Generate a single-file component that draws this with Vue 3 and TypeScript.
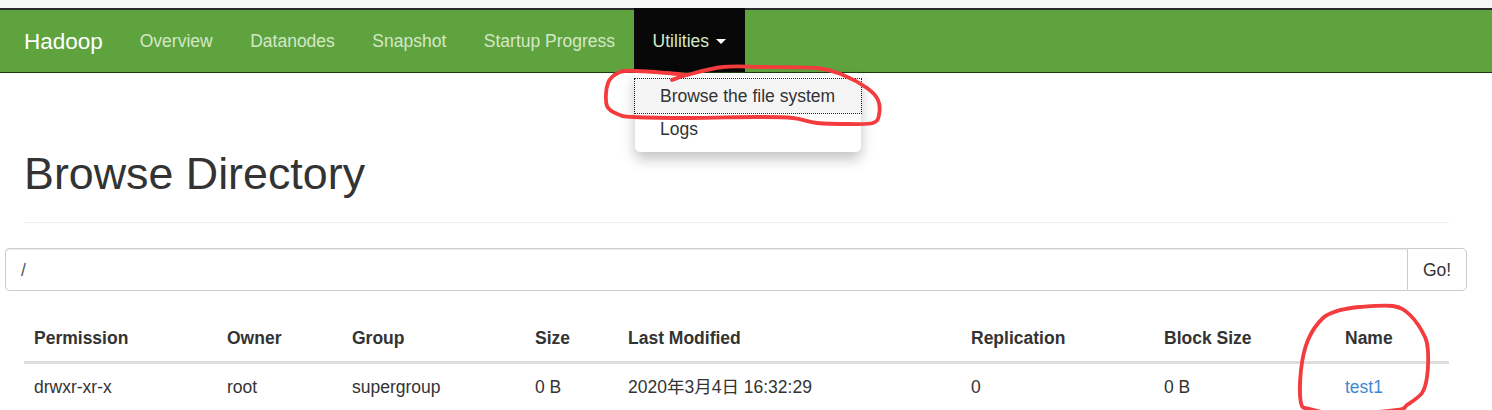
<script setup lang="ts">
type Pt = [number, number]

const navItems: string[] = ['Overview', 'Datanodes', 'Snapshot', 'Startup Progress']
const headers: string[] = ['Permission', 'Owner', 'Group', 'Size', 'Last Modified', 'Replication', 'Block Size', 'Name']
const colWidths: number[] = [193, 125, 183, 93, 343, 193, 181, 114]

const menuLoop: Pt[] = [
  [672, 80], [687, 75], [723, 67], [763, 67], [817, 68], [843, 75], [867, 88], [878, 100],
  [879, 115], [873, 123], [850, 124], [817, 123], [793, 118], [757, 117], [690, 118], [633, 117],
  [620, 115], [607, 106], [608, 83], [620, 72], [637, 71], [667, 73], [687, 75],
]
const nameLoop: Pt[] = [
  [1340, 310], [1360, 307], [1393, 306], [1410, 315], [1425, 337], [1428, 353], [1427, 377],
  [1422, 393], [1407, 405], [1397, 410], [1340, 414], [1310, 409], [1301, 403], [1301, 370],
  [1308, 340], [1323, 318], [1340, 310],
]

function smooth(p: Pt[]): string {
  let d = `M${p[0][0]} ${p[0][1]}`
  for (let i = 0; i < p.length - 1; i++) {
    const a = p[Math.max(i - 1, 0)]
    const b = p[i]
    const c = p[i + 1]
    const e = p[Math.min(i + 2, p.length - 1)]
    const c1x = b[0] + (c[0] - a[0]) / 6
    const c1y = b[1] + (c[1] - a[1]) / 6
    const c2x = c[0] - (e[0] - b[0]) / 6
    const c2y = c[1] - (e[1] - b[1]) / 6
    d += ` C${c1x} ${c1y} ${c2x} ${c2y} ${c[0]} ${c[1]}`
  }
  return d
}
const loops: string[] = [smooth(menuLoop), smooth(nameLoop)]
</script>

<template>
  <div class="page">
    <nav class="navbar">
      <a class="brand">Hadoop</a>
      <ul class="nav">
        <li v-for="item in navItems" :key="item" class="nav-item">{{ item }}</li>
        <li class="nav-item open">Utilities <span class="caret"></span></li>
      </ul>
    </nav>

    <ul class="menu">
      <li class="menu-item active">Browse the file system</li>
      <li class="menu-item">Logs</li>
    </ul>

    <main class="container">
      <h1 class="title">Browse Directory</h1>
      <div class="search">
        <input class="path" type="text" value="/" />
        <button class="go" type="button">Go!</button>
      </div>
      <table class="listing">
        <colgroup>
          <col v-for="w in colWidths" :key="w" :style="{ width: w + 'px' }" />
        </colgroup>
        <thead>
          <tr><th v-for="h in headers" :key="h">{{ h }}</th></tr>
        </thead>
        <tbody>
          <tr>
            <td>drwxr-xr-x</td>
            <td>root</td>
            <td>supergroup</td>
            <td>0 B</td>
            <td>2020年3月4日 16:32:29</td>
            <td>0</td>
            <td>0 B</td>
            <td><a class="link">test1</a></td>
          </tr>
        </tbody>
      </table>
    </main>

    <svg class="marks" width="1492" height="410" viewBox="0 0 1492 410" fill="none">
      <path v-for="d in loops" :key="d" :d="d" stroke="#f43b3d" stroke-width="3.8" stroke-linecap="round" stroke-linejoin="round" />
    </svg>
  </div>
</template>

<style>
html, body { margin: 0; background: #fff; }
</style>

<style scoped>
.page {
  position: relative;
  width: 1492px;
  height: 410px;
  overflow: hidden;
  background: #fff;
  color: #333;
  font-family: "Liberation Sans", "Noto Sans CJK SC", sans-serif;
  font-size: 17.5px;
  line-height: 24px;
}
.navbar {
  display: flex;
  box-sizing: border-box;
  height: 65px;
  margin-top: 8px;
  border-top: 2px solid #2b2b2b;
  border-bottom: 1px solid #1c3a10;
  background: #5fa33e;
  box-shadow: 0 -8px 0 #f6f6f6;
}
.brand {
  display: flex;
  align-items: center;
  box-sizing: border-box;
  width: 121px;
  padding: 1px 0 0 24px;
  color: #fff;
  font-size: 22.5px;
}
.nav {
  display: flex;
  margin: 0;
  padding: 0;
  list-style: none;
}
.nav-item {
  display: flex;
  align-items: center;
  padding: 0 18.75px;
  color: #d4e8c8;
  white-space: pre;
}
.nav-item.open {
  margin: -2px 0 0;
  padding-top: 2px;
  background: #080808;
}
.caret {
  display: inline-block;
  width: 0;
  height: 0;
  margin-left: 2px;
  border-top: 5px solid #fff;
  border-left: 5px solid transparent;
  border-right: 5px solid transparent;
}
.menu {
  position: absolute;
  left: 635px;
  top: 73px;
  z-index: 2;
  box-sizing: border-box;
  width: 226px;
  height: 79px;
  margin: 0;
  padding: 6px 0;
  list-style: none;
  background: #fff;
  border-radius: 0 0 5px 5px;
  box-shadow: 0 7px 14px rgba(0, 0, 0, 0.24);
  color: #333;
}
.menu-item {
  box-sizing: border-box;
  height: 35px;
  padding: 4px 25px;
}
.menu-item.active {
  height: 34px;
  padding-top: 5px;
  background: #f5f5f5;
  outline: 1px dotted #222;
}
.container {
  padding: 0 43px 0 24px;
}
.title {
  margin: 0;
  padding: 75px 0 23px;
  border-bottom: 1px solid #eee;
  font-size: 44.8px;
  line-height: 51px;
  font-weight: 400;
}
.search {
  display: flex;
  height: 43px;
  margin: 25px -18px 0 -19px;
}
.path {
  flex: 1;
  min-width: 0;
  box-sizing: border-box;
  padding: 0 15px;
  border: 1px solid #ccc;
  border-right: 0;
  border-radius: 5px 0 0 5px;
  box-shadow: inset 0 1px 1px rgba(0, 0, 0, 0.08);
  color: #555;
  font: inherit;
  outline: none;
}
.go {
  box-sizing: border-box;
  width: 60px;
  padding: 0;
  border: 1px solid #ccc;
  border-radius: 0 5px 5px 0;
  background: #fff;
  color: #333;
  font: inherit;
}
.listing {
  width: 1425px;
  margin-top: 23px;
  table-layout: fixed;
  border-collapse: collapse;
}
th, td {
  padding: 0 10px;
  text-align: left;
}
th {
  height: 47px;
  font-weight: 700;
  border-bottom: 3px solid #ddd;
}
td {
  height: 45px;
  padding-bottom: 3px;
  border-bottom: 1px solid #ddd;
}
.link {
  color: #3f89d0;
}
.marks {
  position: absolute;
  left: 0;
  top: 0;
  z-index: 3;
  pointer-events: none;
}
</style>
